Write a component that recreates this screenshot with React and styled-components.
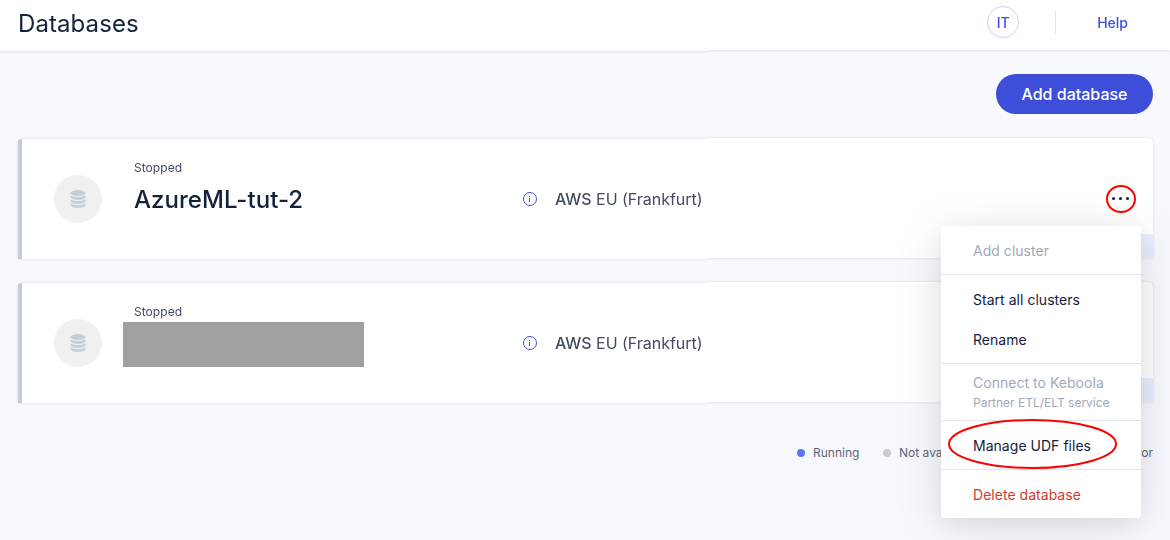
import React from 'react';
import styled, { createGlobalStyle } from 'styled-components';

const GlobalStyle = createGlobalStyle`
  * { box-sizing: border-box; }
  body {
    margin: 0;
    background: #f8f9fe;
    font-family: Inter, "Liberation Sans", sans-serif;
    color: #15213c;
  }
`;

const Page = styled.div`
  position: relative;
  height: 540px;
  overflow: hidden;
  background: #f8f9fe;
`;

const Header = styled.header`
  display: flex;
  height: 51px;
  filter: drop-shadow(0 1px 1.5px rgba(40, 40, 60, 0.12));
`;

const HeaderStart = styled.div`
  width: 707px;
  height: 51px;
  padding-left: 18px;
  background: #fff;
`;

const HeaderEnd = styled.div`
  flex: 1;
  display: flex;
  align-items: center;
  justify-content: flex-end;
  height: 50px;
  padding: 0 42px 6px 0;
  background: #fff;
`;

const Title = styled.h1`
  margin: 0;
  font-size: 24px;
  font-weight: 400;
  line-height: 48px;
  letter-spacing: 0.08px;
`;

const Avatar = styled.div`
  width: 32px;
  height: 32px;
  border: 1px solid #c9d5fb;
  border-radius: 50%;
  color: #3d4fd8;
  font-size: 14px;
  font-weight: 500;
  line-height: 31px;
  text-align: center;
`;

const Divider = styled.div`
  width: 1px;
  height: 24px;
  margin: 0 41px 0 36px;
  background: #e3e4e8;
`;

const HelpLink = styled.a`
  color: #3d4fd8;
  font-size: 14px;
  font-weight: 500;
  line-height: 20px;
  padding-top: 1px;
`;

const Main = styled.main`
  padding: 23px 17px 0 18px;
`;

const Actions = styled.div`
  display: flex;
  justify-content: flex-end;
  margin-bottom: 25px;
`;

const AddButton = styled.button`
  width: 157px;
  height: 40px;
  padding: 0;
  border: 0;
  border-radius: 20px;
  background: #3d4fd8;
  color: #fff;
  font: 500 16px/40px Inter, sans-serif;
`;

const Card = styled.article`
  display: flex;
  height: 120px;
  margin-bottom: 24px;
  filter: drop-shadow(0 0.5px 1.5px rgba(40, 45, 70, 0.15));
`;

const CardInfo = styled.div`
  width: 689px;
  display: flex;
  border-left: 4px solid #c7ccd5;
  border-radius: 4px 0 0 0;
  background: #fff;
`;

const CardAside = styled.div`
  flex: 1;
  display: flex;
  flex-direction: column;
  align-items: flex-end;
  justify-content: space-between;
  height: 120px;
  margin-top: -1px;
  border-radius: 0 5px 2px 0;
  background: #fff;
  overflow: hidden;
`;

const IconDisc = styled.div`
  display: grid;
  place-items: center;
  width: 48px;
  height: 48px;
  margin: 36px 32px 0;
  border-radius: 50%;
  background: #f0f0f3;
`;

const Details = styled.div`
  width: 389px;
  padding-top: 20px;
`;

const Status = styled.div`
  color: #414b63;
  font-size: 12px;
  line-height: 18px;
  letter-spacing: 0.05px;
`;

const Name = styled.h2`
  margin: 5px 0 0;
  font-size: 24px;
  font-weight: 500;
  line-height: 36px;
  letter-spacing: 0.04px;
`;

const Redacted = styled.div`
  width: 241px;
  height: 45px;
  margin: 1px 0 0 -11px;
  background: #a0a0a0;
`;

const Region = styled.div`
  display: flex;
  align-items: center;
  gap: 18px;
  height: 120px;
  color: #414b63;
  font-size: 16px;
  letter-spacing: -0.03px;
  white-space: nowrap;

  b { font-weight: 500; }
`;

const MoreButton = styled.div`
  display: flex;
  height: 28px;
  margin: 47px 17px 0 0;
`;

const CardStrip = styled.div`
  width: 120px;
  height: 24px;
  background: #e8eeff;
`;

const Legend = styled.div`
  display: flex;
  justify-content: flex-end;
  padding-top: 16px;
  color: #5d6579;
  font-size: 12px;
  line-height: 20px;
`;

const LegendItem = styled.span`
  display: flex;
  align-items: center;
  width: ${(p) => p.$width}px;
  white-space: nowrap;

  &::before {
    content: '';
    width: 8px;
    height: 8px;
    margin: -1px 8px 0 0;
    border-radius: 50%;
    background: ${(p) => p.$color};
  }
`;

const Menu = styled.div`
  position: absolute;
  left: 941px;
  top: 226px;
  width: 200px;
  height: 292px;
  border-radius: 4px;
  background: #fff;
  box-shadow: 0 8px 48px rgba(0, 0, 0, 0.13), 0 4px 16px rgba(0, 0, 0, 0.04);
`;

const MenuGroup = styled.div`
  padding: 4px 0;

  & + & { border-top: 1px solid #e1e4ea; }
`;

const MenuItem = styled.div`
  display: flex;
  flex-direction: column;
  justify-content: center;
  height: ${(p) => (p.$tall ? 48 : 40)}px;
  padding: 2px 0 0 32px;
  color: ${(p) => p.$color || '#15213c'};
  font-size: 14px;
  line-height: 20px;
  letter-spacing: 0.03px;
  white-space: nowrap;

  small {
    font-size: 12px;
    line-height: 20px;
    letter-spacing: 0;
  }
`;

const Highlight = styled.svg`
  position: absolute;
  left: 7px;
  top: 193px;
`;

function DatabaseIcon() {
  return (
    <svg width="16" height="18" viewBox="0 0 16 18" fill="#c7ccd5">
      <ellipse cx="8" cy="3" rx="7.6" ry="2.9" />
      {[0, 4, 8].map((y) => (
        <path key={y} transform={`translate(0 ${y})`} d="M.4 5C1.6 6.4 4.6 7.1 8 7.1S14.4 6.4 15.6 5v2.1C15.6 8.7 12.2 10 8 10S.4 8.7.4 7.1Z" />
      ))}
    </svg>
  );
}

function InfoIcon() {
  return (
    <svg width="14" height="14" viewBox="0 0 14 14" fill="none" stroke="#3d4fd8">
      <circle cx="7" cy="7" r="6.5" />
      <path d="M6 6.5H7" strokeWidth=".7" strokeOpacity=".6" />
      <path d="M6.5 6V10M6.5 4V5" />
    </svg>
  );
}

function MoreIcon({ circled }) {
  return (
    <svg width="30" height="28" viewBox="0 0 30 28">
      {[8, 15, 22].map((x) => <circle key={x} cx={x - 0.5} cy="13.5" r="1.5" fill="#15213c" />)}
      {circled && <ellipse cx="15" cy="14" rx="14" ry="13" fill="none" stroke="#f00" strokeWidth="2" />}
    </svg>
  );
}

function DatabaseCard({ name, circled }) {
  return (
    <Card>
      <CardInfo>
        <IconDisc><DatabaseIcon /></IconDisc>
        <Details>
          <Status>Stopped</Status>
          {name ? <Name>{name}</Name> : <Redacted />}
        </Details>
        <Region>
          <InfoIcon />
          <span><b>AWS</b> EU (Frankfurt)</span>
        </Region>
      </CardInfo>
      <CardAside>
        <MoreButton><MoreIcon circled={circled} /></MoreButton>
        <CardStrip />
      </CardAside>
    </Card>
  );
}

export default function App() {
  return (
    <Page>
      <GlobalStyle />
      <Header>
        <HeaderStart><Title>Databases</Title></HeaderStart>
        <HeaderEnd>
          <Avatar>IT</Avatar>
          <Divider />
          <HelpLink>Help</HelpLink>
        </HeaderEnd>
      </Header>
      <Main>
        <Actions><AddButton>Add database</AddButton></Actions>
        <DatabaseCard name="AzureML-tut-2" circled />
        <DatabaseCard />
        <Legend>
          <LegendItem $color="#5b76f7" $width={86}>Running</LegendItem>
          <LegendItem $color="#c7ccd5" $width={226}>Not available</LegendItem>
          <LegendItem $color="#d83a25">Error</LegendItem>
        </Legend>
      </Main>
      <Menu>
        <MenuGroup><MenuItem $color="#a0a8ba">Add cluster</MenuItem></MenuGroup>
        <MenuGroup>
          <MenuItem>Start all clusters</MenuItem>
          <MenuItem>Rename</MenuItem>
        </MenuGroup>
        <MenuGroup>
          <MenuItem $tall $color="#a0a8ba">Connect to Keboola<small>Partner ETL/ELT service</small></MenuItem>
        </MenuGroup>
        <MenuGroup><MenuItem>Manage UDF files</MenuItem></MenuGroup>
        <MenuGroup><MenuItem $color="#d23b29">Delete database</MenuItem></MenuGroup>
        <Highlight width="169" height="50" viewBox="0 0 169 50">
          <ellipse cx="84.5" cy="25" rx="83.5" ry="24" fill="none" stroke="#f00" strokeWidth="2" />
        </Highlight>
      </Menu>
    </Page>
  );
}
